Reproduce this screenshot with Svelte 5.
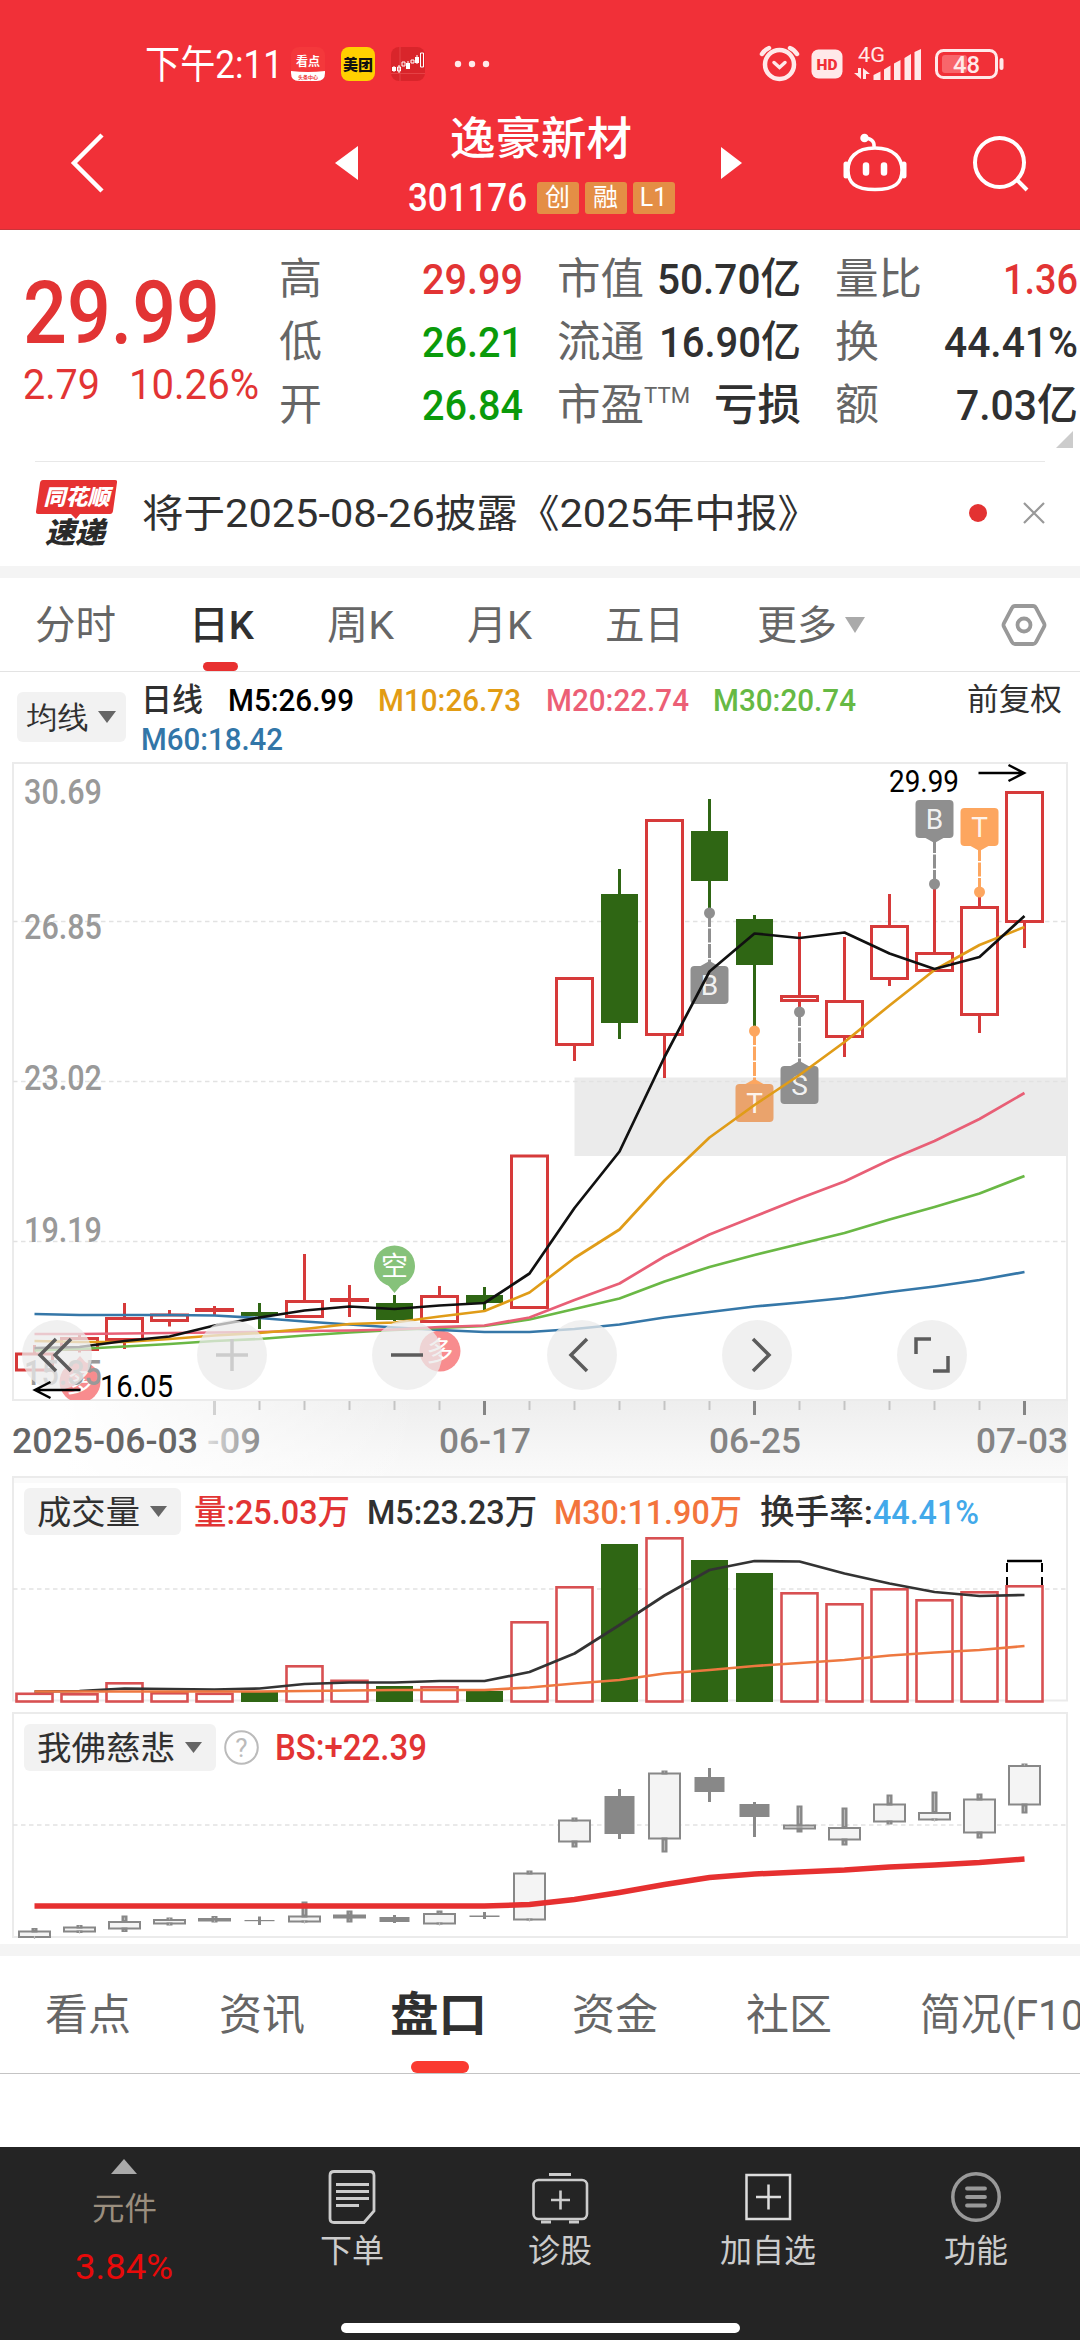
<script lang="ts">
  type Candle = { up: boolean; high: number; top: number; bottom: number; low: number }
  type Legend = { text: string; width: number; cls: string }

  const STEP = 45
  const FIRST = 34.5
  const cx = (i: number) => FIRST + i * STEP

  const toCandles = (rows: number[][]): Candle[] =>
    rows.map(([up, high, top, bottom, low]) => ({ up: up === 1, high, top, bottom, low }))

  const line = (ys: number[]) => ys.map((y, i) => `${cx(i)},${y}`).join(' ')

  const quotes = [
    [
      { label: '高', lw: 43, value: '29.99', vw: 101, cls: 'red' },
      { label: '低', lw: 43, value: '26.21', vw: 101, cls: 'green' },
      { label: '开', lw: 43, value: '26.84', vw: 101, cls: 'green' },
    ],
    [
      { label: '市值', lw: 87, value: '50.70亿', vw: 144, cls: 'ink' },
      { label: '流通', lw: 87, value: '16.90亿', vw: 142, cls: 'ink' },
      { label: '市盈', lw: 87, value: '亏损', vw: 87, cls: 'ink', sup: 'TTM' },
    ],
    [
      { label: '量比', lw: 87, value: '1.36', vw: 75, cls: 'red' },
      { label: '换', lw: 44, value: '44.41%', vw: 134, cls: 'ink' },
      { label: '额', lw: 44, value: '7.03亿', vw: 122, cls: 'ink' },
    ],
  ]

  const periods = [
    { text: '分时', width: 81 },
    { text: '日K', width: 65, active: true },
    { text: '周K', width: 67 },
    { text: '月K', width: 65 },
    { text: '五日', width: 79 },
    { text: '更多', width: 80, more: true },
  ]

  const legends: Legend[] = [
    { text: '日线', width: 62, cls: 'ink' },
    { text: 'M5:26.99', width: 126, cls: 'black' },
    { text: 'M10:26.73', width: 143, cls: 'amber' },
    { text: 'M20:22.74', width: 143, cls: 'pink' },
    { text: 'M30:20.74', width: 143, cls: 'lime' },
  ]

  const candles = toCandles([
    [1, 1345, 1352.5, 1371.5, 1371],
    [1, 1334, 1337, 1351, 1352.5],
    [1, 1303, 1317, 1341, 1349],
    [1, 1310, 1313.5, 1322, 1326.5],
    [1, 1306, 1308, 1312, 1315],
    [0, 1303, 1312, 1316, 1329],
    [1, 1254, 1300, 1318, 1318],
    [1, 1285, 1298, 1302, 1317],
    [0, 1295, 1303, 1320, 1321],
    [1, 1286, 1295, 1323, 1323],
    [0, 1287, 1295, 1303, 1310],
    [1, 1155, 1154.5, 1309, 1309],
    [1, 977, 977, 1046, 1061],
    [0, 869, 894, 1023, 1039],
    [1, 819, 819, 1036, 1078],
    [0, 799, 831, 881, 912],
    [0, 915, 919, 965, 1031],
    [1, 932, 995, 1002, 1012],
    [1, 937, 1000, 1038, 1057],
    [1, 894, 925, 980, 986],
    [1, 884, 952, 972, 972],
    [1, 892, 906, 1016, 1033],
    [1, 791, 791, 923, 948],
  ])

  const averages = [
    { cls: 'line-blue', ys: [1314, 1315, 1315, 1315, 1315.5, 1318, 1321.5, 1324.5, 1327.5, 1330, 1332, 1332, 1329, 1324.5, 1317.5, 1312, 1306.5, 1302.5, 1298, 1292, 1286.5, 1280, 1272] },
    { cls: 'line-lime', ys: [1350.5, 1349, 1346.5, 1344, 1341, 1339, 1335.5, 1332.5, 1330, 1328, 1326, 1319.5, 1309, 1298.5, 1281.5, 1267, 1255, 1244, 1233, 1219.5, 1207, 1193.5, 1176] },
    { cls: 'line-pink', ys: [1334, 1334, 1333.5, 1333, 1332.5, 1332, 1331, 1330.5, 1329.5, 1327, 1325.5, 1317.5, 1300, 1283.5, 1256.5, 1234.5, 1216.5, 1198.5, 1181.5, 1160, 1141, 1119, 1093] },
    { cls: 'line-amber', ys: [1341, 1342, 1342, 1339, 1335.5, 1333, 1329, 1324, 1322.5, 1316.5, 1311, 1292.5, 1258, 1229.5, 1180.5, 1137.5, 1105, 1075, 1042, 1005.5, 970, 945, 927] },
    { cls: 'line-black', ys: [1348, 1347, 1341, 1336.5, 1325.5, 1317.5, 1310.5, 1306.5, 1309, 1305.5, 1303, 1273.5, 1208, 1151.5, 1057, 971.5, 933.5, 938, 932.5, 953.5, 969, 957, 916] },
  ]

  // box is the top of the square tag, dot is the y of the candle end it points at
  const flags = [
    { i: 15, letter: 'B', box: 966, dot: 913, fill: '#8f8f8f' },
    { i: 16, letter: 'T', box: 1084, dot: 1031, fill: '#fda65f', muted: true },
    { i: 17, letter: 'S', box: 1066, dot: 1012, fill: '#8f8f8f' },
    { i: 20, letter: 'B', box: 800, dot: 884, fill: '#8f8f8f' },
    { i: 21, letter: 'T', box: 808, dot: 892, fill: '#fda65f' },
  ]

  const volumes = [1692.5, 1693, 1682, 1692, 1692.5, 1692, 1665, 1679.5, 1686, 1686, 1691, 1621, 1586, 1544, 1537, 1560, 1573, 1592, 1603, 1588, 1599, 1591, 1585]
  const volumeM5 = [1691.5, 1691, 1688.5, 1689, 1689.5, 1688.5, 1684, 1682.5, 1682.5, 1681, 1681, 1672, 1653.5, 1625, 1595.5, 1570, 1561, 1561.5, 1573.5, 1583.5, 1592, 1596, 1595]
  const volumeM30 = [1691.5, 1691.5, 1691.5, 1691.5, 1691.5, 1691.5, 1691, 1690.5, 1690, 1690, 1690, 1687.5, 1683.5, 1680, 1673.5, 1670, 1666, 1663, 1660, 1655.5, 1652.5, 1650, 1646]

  const bsCandles = toCandles([
    [1, 1928, 1930.5, 1938, 1938],
    [1, 1925, 1926.5, 1932.5, 1933],
    [1, 1915.5, 1921, 1929.5, 1932],
    [1, 1917.5, 1919, 1924.5, 1925.5],
    [1, 1916, 1918, 1921.5, 1922.5],
    [0, 1916.5, 1920, 1921.2, 1925],
    [1, 1901.5, 1915.5, 1922.5, 1922.5],
    [1, 1910.5, 1914.5, 1918.5, 1922.5],
    [0, 1915, 1917, 1922, 1923],
    [1, 1910.5, 1913, 1924.5, 1924.5],
    [0, 1912, 1915.5, 1917, 1919],
    [1, 1870.5, 1872.5, 1920.5, 1920.5],
    [1, 1817.5, 1819.5, 1842.5, 1847.5],
    [0, 1789, 1796, 1834, 1839],
    [1, 1770.5, 1772.5, 1839.5, 1852.5],
    [0, 1768, 1777, 1792, 1802],
    [0, 1802, 1804, 1817, 1837],
    [1, 1805.5, 1824.5, 1829.5, 1832.5],
    [1, 1807.5, 1827, 1840.5, 1845.5],
    [1, 1794.5, 1803.5, 1822.5, 1824.5],
    [1, 1791.5, 1812, 1820.5, 1820.5],
    [1, 1793.5, 1798.5, 1833.5, 1838.5],
    [1, 1763.5, 1765, 1805.5, 1813.5],
  ])
  const bsLine = [1906, 1906, 1906, 1906, 1906, 1906, 1906, 1906, 1906, 1906, 1906, 1904.5, 1899.5, 1892.5, 1884.5, 1877.5, 1874, 1872, 1870, 1867, 1865, 1862.5, 1859]

  const sections = [
    { text: '看点', width: 86 },
    { text: '资讯', width: 86 },
    { text: '盘口', width: 97, active: true },
    { text: '资金', width: 86 },
    { text: '社区', width: 86 },
    { text: '简况(F10)', width: 178 },
  ]

  let tool = $state('')
  const tools = [
    { id: 'first', x: 57 },
    { id: 'plus', x: 232 },
    { id: 'minus', x: 407 },
    { id: 'prev', x: 582 },
    { id: 'next', x: 757 },
    { id: 'full', x: 932 },
  ]
</script>

{#snippet fit(text: string, width: number, size: number, cls: string)}
  <svg class="fit {cls}" {width} height={size * 1.2} aria-label={text}>
    <text y={size * 0.96} font-size={size} textLength={width} lengthAdjust="spacingAndGlyphs">{text}</text>
  </svg>
{/snippet}

{#snippet label(text: string, x: number, y: number, width: number, size: number, cls: string)}
  <text class={cls} {x} {y} font-size={size} textLength={width} lengthAdjust="spacingAndGlyphs">{text}</text>
{/snippet}

<div class="screen">
  <header>
    <div class="status">
      {@render fit('下午2:11', 138, 39, 'white')}
      <svg class="app" width="34" height="34" viewBox="0 0 34 34">
        <rect width="34" height="34" rx="8" fill="#f4383b" />
        <path d="M0 24Q17 26 34 24V26Q34 34 26 34H8Q0 34 0 26Z" fill="#fff" />
        <text x="17" y="19" font-size="12" font-weight="700" fill="#fff" text-anchor="middle">看点</text>
        <text x="17" y="32" font-size="5" font-weight="700" fill="#e33" text-anchor="middle">头条中心</text>
      </svg>
      <svg class="app" width="34" height="34" viewBox="0 0 34 34">
        <rect width="34" height="34" rx="8" fill="#ffd000" />
        <text x="17" y="22.500" font-size="15" font-weight="900" fill="#111" text-anchor="middle">美团</text>
      </svg>
      <svg class="app" width="34" height="34" viewBox="0 0 34 34">
        <rect width="34" height="34" rx="8" fill="#d9252b" />
        <path d="M9 0V34M0 26.500H34" stroke="#e8494d" stroke-width="0.800" />
        <path d="M1 20h4v4H1ZM15 16h4v6H15ZM24 10h4v6H24Z" fill="#fff" />
        <path d="M3 19v6M8 18v8M17 14v8M26 8v9" stroke="#fff" />
        <path d="M6.500 20h3v4h-3ZM11 15h3v4h-3ZM20 13h3v3h-3ZM29.500 6h3v14h-3Z" fill="none" stroke="#fff" />
      </svg>
      <svg class="dots" width="36" height="8" viewBox="0 0 36 8" fill="#ffe9e9">
        <circle cx="4" cy="4" r="3.200" /><circle cx="18" cy="4" r="3.200" /><circle cx="32" cy="4" r="3.200" />
      </svg>
      <svg class="signals" width="250" height="40" viewBox="758 44 250 40" fill="none" stroke="#ffe9e9">
        <circle cx="779.500" cy="64.500" r="14.500" stroke-width="4.500" />
        <path d="M762 54Q765 49.500 769 48M797 54Q794 49.500 790 48" stroke-width="4.500" stroke-linecap="round" />
        <path d="M774 62.500L779.500 67.500L785 62.500" stroke-width="3.500" stroke-linecap="round" />
        <rect x="811.500" y="49.500" width="31" height="29" rx="7" fill="#ffe9e9" stroke="none" />
        <text x="827" y="69.500" font-size="15.500" font-weight="900" text-anchor="middle" fill="#f13038" stroke="none">HD</text>
        <g fill="#ffe9e9" stroke="none">
          <text x="858" y="62" font-size="20" textLength="27" lengthAdjust="spacingAndGlyphs">4G</text>
          <path d="M858 68h3V79L854 73h4ZM863 79V68l7 6h-4v5Z" />
          <path d="M873.500 75L880.500 71.500V80h-7ZM884 69.500L890.500 65.500V80H884ZM894 63.500L900.500 60V80H894ZM904.500 58L911 54V80h-6.500ZM914.500 52L921 49V80h-6.500Z" />
        </g>
        <rect x="936.500" y="50.500" width="60" height="27" rx="7" stroke-width="3" />
        <rect x="942" y="55" width="25" height="18" rx="3" fill="#f8666b" stroke="none" />
        <path d="M1001.500 60V68" stroke-width="4" stroke-linecap="round" />
        <text x="953" y="72.500" font-size="23" font-weight="500" textLength="27" lengthAdjust="spacingAndGlyphs" fill="#ffe9e9" stroke="none">48</text>
      </svg>
    </div>

    <div class="bar">
      <svg class="back" width="40" height="66" viewBox="68 130 40 66"><path d="M102 135L74 163L102 191" fill="none" stroke="#fff" stroke-width="4.500" /></svg>
      <svg class="prev" width="24" height="36" viewBox="0 0 24 36"><path d="M23 1V35L0 18Z" fill="#fff" /></svg>
      <div class="title">
        {@render fit('逸豪新材', 182, 45.5, 'white medium')}
        <div class="code">
          {@render fit('301176', 119, 38, 'white medium')}
          <span class="badge">创</span>
          <span class="badge">融</span>
          <span class="badge">L1</span>
        </div>
      </div>
      <svg class="next" width="22" height="32" viewBox="0 0 22 32"><path d="M0 0V32L21 16Z" fill="#fff" /></svg>
      <svg class="robot" width="68" height="66" viewBox="841 131 68 66" fill="none" stroke="#fff" stroke-width="3.500">
        <path d="M875 149C895 149 902 160 902 171C902 184 895 190.500 875 190.500C855 190.500 848 184 848 171C848 160 855 149 875 149Z" />
        <path d="M874 148Q875 140 865 139" />
        <circle cx="864.500" cy="139" r="2.500" fill="#fff" />
        <path d="M846 165V177M904 165V177" stroke-width="5" stroke-linecap="round" />
        <path d="M866 166.500V173.500M884 166.500V173.500" stroke-width="6.500" stroke-linecap="round" />
      </svg>
      <svg class="search" width="62" height="66" viewBox="970 131 62 66" fill="none" stroke="#fff" stroke-width="4">
        <circle cx="999.500" cy="163.500" r="24.500" />
        <path d="M1017 181L1027 191" />
      </svg>
    </div>
  </header>

  <section class="quote">
    <div class="price">
      {@render fit('29.99', 197, 87, 'red medium')}
      <div class="change">
        {@render fit('2.79', 77, 43, 'red')}
        {@render fit('10.26%', 130, 43, 'red')}
      </div>
    </div>
    {#each quotes as column}
      <div class="column">
        {#each column as q}
          <div class="cell">
            <span class="name">
              {@render fit(q.label, q.lw, 43, 'grey')}
              {#if q.sup}<span class="sup">{@render fit(q.sup, 46, 22, 'grey')}</span>{/if}
            </span>
            {@render fit(q.value, q.vw, 43, q.cls + ' medium')}
          </div>
        {/each}
      </div>
    {/each}
    <i class="corner"></i>
  </section>

  <section class="news">
    <svg width="82" height="68" viewBox="35 479 82 68">
      <path d="M43 480H115Q117.500 480 117 482.500L113 511Q112.500 514 110 514H80L76 519L71 514H38Q35.500 514 36 511.500L40 483Q40.500 480 43 480Z" fill="#e63232" />
      <g font-weight="900" text-anchor="middle" font-style="italic">
        <text x="76.500" y="505" font-size="22" fill="#fff">同花顺</text>
        <text x="75" y="543" font-size="29" fill="#2a2a2a" textLength="60" lengthAdjust="spacingAndGlyphs">速递</text>
      </g>
    </svg>
    {@render fit('将于2025-08-26披露《2025年中报》', 677, 39, 'ink')}
    <i class="unread"></i>
    <svg class="close" width="22" height="22" viewBox="0 0 22 22"><path d="M1 1L21 21M21 1L1 21" stroke="#999" stroke-width="2.200" /></svg>
  </section>

  <div class="band"></div>

  <nav class="periods">
    {#each periods as p}
      <span class="period" class:active={p.active}>
        {@render fit(p.text, p.width, 39.5, p.active ? 'ink medium' : 'grey')}
        {#if p.more}<i class="down big"></i>{/if}
      </span>
    {/each}
    <svg class="gear" width="46" height="44" viewBox="1000 603 46 44" fill="none" stroke="#999" stroke-width="3.800">
      <path d="M1014 606H1032Q1034 606 1035 608L1043 623Q1044 625 1043 627L1035 642Q1034 644 1032 644H1014Q1012 644 1011 642L1003 627Q1002 625 1003 623L1011 608Q1012 606 1014 606Z" />
      <circle cx="1023" cy="625" r="6.500" />
    </svg>
  </nav>

  <section class="legend">
    <button class="pick">{@render fit('均线', 61, 31, 'ink')}<i class="down"></i></button>
    <div class="rows">
      <div class="row">
        {#each legends as l}{@render fit(l.text, l.width, 32, l.cls + ' medium')}{/each}
      </div>
      <div class="row">{@render fit('M60:18.42', 142, 32, 'blue medium')}</div>
    </div>
    {@render fit('前复权', 95, 31, 'ink adjust')}
  </section>

  <svg class="chart" width="1080" height="720" viewBox="0 756 1080 720">
    <defs>
      <linearGradient id="axis" x1="0" y1="0" x2="0" y2="1">
        <stop offset="0" stop-color="#eeeeee" /><stop offset="1" stop-color="#fafafa" />
      </linearGradient>
      <linearGradient id="fade"><stop offset="0.150" stop-color="#fff" /><stop offset="1" stop-color="#fff" stop-opacity="0" /></linearGradient>
      <linearGradient id="tail"><stop offset="0" stop-color="#ddd" /><stop offset="1" stop-color="#8a8a8a" /></linearGradient>
      <clipPath id="pane"><rect x="13" y="763" width="1055" height="637" /></clipPath>
    </defs>
    <rect x="0" y="1401" width="1068" height="75" fill="url(#axis)" />
    <rect x="0" y="1401" width="420" height="75" fill="url(#fade)" />
    <rect x="13" y="763" width="1054" height="637" fill="#fff" stroke="#ebebeb" stroke-width="2" />
    <rect x="574.500" y="1077.500" width="493" height="78.500" fill="#ebebeb" />
    <path class="grid" d="M13 921.500H1067M13 1081.500H1067M13 1241.500H1067" />

    <g clip-path="url(#pane)">
      <g fill="#f88c8e">
        <path d="M80 1356L87 1364H73Z" />
        <circle cx="80" cy="1382" r="20.500" />
        <circle cx="440" cy="1351" r="20.500" />
      </g>
      <g class="seal"><text x="80" y="1392">多</text><text x="440" y="1361">多</text></g>
      <path d="M394.500 1293L387 1284H402Z" fill="#86c27a" />
      <circle cx="394.500" cy="1266" r="20.500" fill="#86c27a" />
      <g class="seal"><text x="394.500" y="1276">空</text></g>
    </g>

    {#each candles as c, i}
      {#if c.up}
        <path class="wick-up" d="M{cx(i)} {c.high}V{c.top + 1}M{cx(i)} {c.bottom - 1}V{c.low}" />
        <rect class="body-up" x={cx(i) - 18} y={c.top + 1.5} width="36" height={c.bottom - c.top - 3} />
      {:else}
        <path class="wick-down" d="M{cx(i)} {c.high}V{c.low}" />
        <rect class="body-down" x={cx(i) - 18.5} y={c.top} width="37" height={c.bottom - c.top} />
      {/if}
    {/each}

    {#each flags as f}
      {@const below = f.box > f.dot}
      <g transform="translate({cx(f.i)} 0)">
        <path d="M0 {f.dot}V{below ? f.box : f.box + 38}" stroke={f.fill} stroke-width="3" stroke-dasharray="14 1.500" />
        <circle cy={f.dot} r="5.500" fill={f.fill} />
        <path d={below ? `M0 ${f.box - 5}L9 ${f.box}H-9Z` : `M0 ${f.box + 43}L9 ${f.box + 38}H-9Z`} fill={f.fill} />
        <rect x="-19" y={f.box} width="38" height="38" rx="4" fill={f.muted ? '#eaa36c' : f.fill} />
        <text class="flag" y={f.box + 29}>{f.letter}</text>
      </g>
    {/each}

    {#each averages as a}
      <polyline class="avg {a.cls}" points={line(a.ys)} />
    {/each}

    <g class="ticks">
      {#each candles as _, i}
        {#if i >= 4}
          <path class:major={i % 6 === 4} class:faint={i === 4} d="M{cx(i)} 1401V{i % 6 === 4 ? 1415 : 1410}" />
        {/if}
      {/each}
    </g>

    {@render label('30.69', 24, 804, 78, 35, 'scale')}
    {@render label('26.85', 24, 939, 78, 35, 'scale')}
    {@render label('23.02', 24, 1090, 78, 35, 'scale')}
    {@render label('19.19', 24, 1242, 78, 35, 'scale')}
    {@render label('15.35', 24, 1385, 78, 35, 'scale')}

    {#each tools as t}
      <g
        class="tool"
        class:disabled={t.id === 'plus'}
        transform="translate({t.x} 1355)"
        role="button"
        tabindex="-1"
        aria-label={t.id}
        onclick={() => (tool = t.id)}
        onkeydown={() => (tool = t.id)}
      >
        <circle r="35" />
        {#if t.id === 'first'}
          <path d="M-1 -16L-17 0L-1 16M14 -16L-2 0L14 16" />
        {:else if t.id === 'plus'}
          <path d="M-16 0H16M0 -16V16" />
        {:else if t.id === 'minus'}
          <path d="M-16 0H16" />
        {:else if t.id === 'prev'}
          <path d="M5 -16L-11 0L5 16" />
        {:else if t.id === 'next'}
          <path d="M-4 -16L12 0L-4 16" />
        {:else}
          <path d="M-16 -1V-16H-1M1 16H16V1" />
        {/if}
      </g>
    {/each}

    {@render label('29.99', 889, 792, 70, 31, 'black')}
    <path class="arrow" d="M978.500 773H1024M1008.500 765L1024 773L1008.500 781" />
    {@render label('16.05', 100, 1397, 73, 31, 'black')}
    <path class="arrow" d="M80.500 1390H35M50.500 1382L35 1390L50.500 1398" />

    {@render label('2025-06-03', 12, 1453, 186, 35, 'date strong')}
    <text x="207" y="1453" font-size="35" font-weight="500" textLength="54" lengthAdjust="spacingAndGlyphs" fill="url(#tail)">-09</text>
    {@render label('06-17', 439, 1453, 92, 35, 'date')}
    {@render label('06-25', 709, 1453, 92, 35, 'date')}
    {@render label('07-03', 976, 1453, 92, 35, 'date')}
  </svg>

  <svg class="chart" width="1080" height="230" viewBox="0 1476 1080 230">
    <rect x="13" y="1477" width="1055" height="6" fill="#fafafa" />
    <rect x="13" y="1477" width="1054" height="223.500" fill="none" stroke="#ebebeb" stroke-width="2" />
    <path class="grid" d="M13 1589H1067" />
    <rect x="24" y="1488" width="157" height="47" rx="6" fill="#f2f2f2" />
    {@render label('成交量', 37, 1524, 103, 33.5, 'ink')}
    <path d="M150 1506H167L158.500 1517Z" fill="#666" />
    {@render label('量:25.03万', 194, 1524, 156, 34, 'red medium')}
    {@render label('M5:23.23万', 367, 1524, 170, 34, 'ink medium')}
    {@render label('M30:11.90万', 554, 1524, 188, 34, 'orange medium')}
    {@render label('换手率:', 760, 1524, 113, 34, 'ink medium')}
    {@render label('44.41%', 873, 1524, 106, 34, 'sky medium')}
    {#each volumes as top, i}
      {#if candles[i].up}
        <rect class="vol-up" x={cx(i) - 18} y={top + 1.3} width="36" height={1700.2 - top} />
      {:else}
        <rect class="body-down" x={cx(i) - 18.5} y={top} width="37" height={1702 - top} />
      {/if}
    {/each}
    <path d="M1007 1561H1042" stroke="#000" stroke-width="2.500" />
    <path d="M1007 1563V1585M1042 1563V1585" stroke="#000" stroke-width="2" stroke-dasharray="9 5" />
    <polyline class="avg line-ink" points={line(volumeM5)} />
    <polyline class="avg line-orange" points={line(volumeM30)} />
  </svg>

  <svg class="chart" width="1080" height="238" viewBox="0 1706 1080 238">
    <rect x="13" y="1713" width="1054" height="224" fill="none" stroke="#ebebeb" stroke-width="2" />
    <path class="grid" d="M13 1825H1067" />
    <rect x="24" y="1724" width="192" height="47" rx="6" fill="#f2f2f2" />
    {@render label('我佛慈悲', 37, 1760, 138, 33.5, 'ink')}
    <path d="M185 1742H202L193.500 1753Z" fill="#666" />
    <circle cx="241.500" cy="1747.500" r="16.300" fill="none" stroke="#bbb" stroke-width="2" />
    <text x="241.500" y="1757" font-size="26" fill="#bbb" text-anchor="middle">?</text>
    {@render label('BS:+22.39', 275, 1760, 152, 36, 'red medium')}
    {#each bsCandles as c, i}
      {#if c.up}
        <rect class="bs-up" x={cx(i) - 15.5} y={c.top + 1} width="31" height={c.bottom - c.top - 2} />
        <path class="bs-wick" d="M{cx(i)} {c.high}V{c.top + 2}M{cx(i)} {c.bottom - 2}V{c.low}" />
        <path class="bs-core" d="M{cx(i)} {c.high + 2}V{c.top - 1}M{cx(i)} {c.bottom + 1}V{c.low - 2}" />
      {:else}
        <rect x={cx(i) - 15} y={c.top} width="30" height={c.bottom - c.top} fill="#888" />
        <path d="M{cx(i)} {c.high}V{c.low}" stroke="#888" stroke-width="3" />
      {/if}
    {/each}
    <polyline points={line(bsLine)} fill="none" stroke="#e63030" stroke-width="5.500" />
  </svg>

  <div class="band"></div>

  <nav class="sections">
    {#each sections as s}
      <span class="section" class:active={s.active}>
        {@render fit(s.text, s.width, s.active ? 47 : 43, s.active ? 'ink bold' : 'grey')}
      </span>
    {/each}
  </nav>

  <div class="empty"></div>

  <footer>
    <div class="actions">
      <div class="sector">
        <i class="up"></i>
        {@render fit('元件', 65, 32, 'tan')}
        {@render fit('3.84%', 98, 35, 'loss')}
      </div>
      <div class="action">
        <svg width="52" height="56" viewBox="326 2169 52 56" fill="none" stroke="#ccc" stroke-width="2.800">
          <path d="M334 2171.500H370Q374 2171.500 374 2175.500V2211L364 2222.500H334Q330 2222.500 330 2218.500V2175.500Q330 2171.500 334 2171.500Z" />
          <path d="M336 2184.500H369M336 2191.500H369M336 2198.500H369M336 2205.500H359" />
        </svg>
        {@render fit('下单', 64, 32, 'light')}
      </div>
      <div class="action">
        <svg width="60" height="56" viewBox="530 2169 60 56" fill="none" stroke="#ccc" stroke-width="2.600">
          <rect x="533.500" y="2180" width="53.500" height="39" rx="5" />
          <path d="M549 2174.500H571M541 2222H551M569 2222H579" stroke-width="3" />
          <path d="M551 2200H570M560.500 2190.500V2209.500" />
        </svg>
        {@render fit('诊股', 64, 32, 'light')}
      </div>
      <div class="action">
        <svg width="50" height="56" viewBox="743 2169 50 56" fill="none" stroke="#ddd" stroke-width="2.500">
          <rect x="746.500" y="2175" width="43.500" height="44" />
          <path d="M756 2197H781M768.500 2184.500V2209.500" />
        </svg>
        {@render fit('加自选', 96, 32, 'light')}
      </div>
      <div class="action">
        <svg width="52" height="56" viewBox="950 2169 52 56" fill="none" stroke="#999">
          <circle cx="976" cy="2197" r="23.200" stroke-width="3.500" />
          <path d="M967 2188.500H985M967 2197H985M967 2205.500H985" stroke-width="3.800" stroke-linecap="round" />
        </svg>
        {@render fit('功能', 64, 32, 'light')}
      </div>
    </div>
    <div class="home"></div>
  </footer>
</div>

<style>
  :global(body) {
    margin: 0;
    background: #fff;
  }

  .screen {
    display: flex;
    flex-direction: column;
    width: 1080px;
    height: 2340px;
    overflow: hidden;
    background: #fff;
    font-family: Roboto, 'Noto Sans CJK SC', sans-serif;
  }

  svg { display: block; flex-shrink: 0; }
  .fit { overflow: visible; }

  /* ── Text colours ── */
  .white { fill: #fff; }
  .ink { fill: #303030; }
  .black { fill: #000; }
  .grey { fill: #666; }
  .red { fill: #e23434; }
  .green { fill: #0a9a0a; }
  .amber { fill: #e29c14; }
  .pink { fill: #ec5f76; }
  .lime { fill: #66b944; }
  .blue { fill: #3276a8; }
  .orange { fill: #f3743c; }
  .sky { fill: #42a9ea; }
  .light { fill: #ccc; }
  .tan { fill: #9a8e7e; }
  .loss { fill: #e80a0a; }
  .medium { font-weight: 500; }
  .bold { font-weight: 700; }

  /* ── Header ── */
  header {
    height: 230px;
    background: #f13038;
    box-sizing: border-box;
    border-bottom: 1px solid #c9343a;
  }

  .status {
    display: flex;
    align-items: center;
    height: 66px;
    padding: 31px 0 0 145px;
  }

  .app { margin-left: 8px; }
  .app + .app { margin-left: 16px; }
  .dots { margin-left: 29px; }
  .signals { margin-left: 268px; }

  .bar {
    display: flex;
    align-items: center;
    height: 132px;
    padding-left: 68px;
  }

  .prev { margin-left: 227px; }
  .next { margin-left: 47px; }
  .robot { margin-left: 98px; }
  .search { margin-left: 61px; }

  .title {
    display: flex;
    flex-direction: column;
    align-items: center;
    gap: 9px;
    width: 266px;
    margin-left: 49px;
    padding-top: 6px;
  }

  .code { display: flex; align-items: center; gap: 6px; }
  .code .fit { margin-right: 4px; }

  .badge {
    width: 42px;
    height: 32px;
    border-radius: 3px;
    background: #e48e45;
    color: #fff;
    font-size: 25px;
    line-height: 32px;
    text-align: center;
  }

  /* ── Quote ── */
  .quote {
    position: relative;
    display: flex;
    height: 231px;
    margin: 0 35px;
    border-bottom: 1px solid #e8e8e8;
  }

  .price {
    width: 256px;
    margin-left: -12px;
    padding-top: 29px;
    flex-shrink: 0;
  }

  .change { display: flex; gap: 29px; margin-top: -5px; }

  .column {
    width: 244px;
    flex-shrink: 0;
    padding-top: 17px;
    margin-right: 34px;
  }

  .column:nth-of-type(4) { width: 243px; }

  .cell {
    display: flex;
    align-items: center;
    justify-content: space-between;
    height: 63px;
  }

  .name { display: flex; }
  .sup { padding-top: 3px; }

  .corner {
    position: absolute;
    right: -28px;
    bottom: 13px;
    border-left: 17px solid transparent;
    border-bottom: 17px solid #ccc;
  }

  /* ── News ── */
  .news {
    display: flex;
    align-items: center;
    height: 102px;
    padding: 0 0 2px 35px;
  }

  .news .fit { margin-left: 25px; }

  .unread {
    width: 18px;
    height: 18px;
    margin-left: 150px;
    border-radius: 50%;
    background: #e33232;
  }

  .close { margin-left: 36px; }
  .band { height: 12px; background: #f4f4f4; }

  /* ── Period tabs ── */
  .periods {
    display: flex;
    align-items: center;
    gap: 73px;
    height: 93px;
    padding-left: 35px;
    border-bottom: 1px solid #e3e3e3;
  }

  .period {
    position: relative;
    display: flex;
    align-items: center;
    gap: 8px;
    height: 93px;
  }

  .period.active::after {
    content: '';
    position: absolute;
    left: 14px;
    bottom: 0;
    width: 35px;
    height: 9px;
    border-radius: 5px;
    background: #e83030;
  }

  .gear { margin-left: 63px; }

  .down {
    border: 9px solid transparent;
    border-top: 12px solid #666;
    border-bottom: 0;
  }

  .down.big {
    border-width: 16px 10.5px 0;
    border-top-color: #aaa;
  }

  /* ── Moving average legend ── */
  .legend {
    display: flex;
    align-items: flex-start;
    height: 84px;
    padding: 0 18px 0 17px;
  }

  .pick {
    display: flex;
    align-items: center;
    justify-content: center;
    gap: 10px;
    width: 109px;
    height: 50px;
    margin: 20px 15px 0 0;
    padding: 0;
    border: none;
    border-radius: 6px;
    background: #f2f2f2;
  }

  .rows { padding-top: 8px; }
  .row { display: flex; gap: 24.5px; height: 39px; }
  .adjust { margin: 8px 0 0 auto; }

  /* ── Charts ── */
  .grid { stroke: #e2e2e2; stroke-width: 1.3; stroke-dasharray: 4.5 3.5; }
  .wick-up { stroke: #d63a3a; stroke-width: 3; }
  .body-up { fill: #fff; stroke: #d63a3a; stroke-width: 3; }
  .wick-down { stroke: #2f6614; stroke-width: 3; }
  .body-down { fill: #2f6614; }
  .vol-up { fill: #fff; stroke: #d85052; stroke-width: 2.6; }
  .avg { fill: none; stroke-width: 2.7; stroke-linejoin: round; }
  .line-black { stroke: #111; }
  .line-ink { stroke: #333; }
  .line-amber { stroke: #e09c18; }
  .line-pink { stroke: #e85f76; }
  .line-lime { stroke: #6ab845; }
  .line-blue { stroke: #3577a8; }
  .line-orange { stroke: #ee7840; }
  .scale { fill: #999; font-weight: 500; }
  .date { fill: #848484; font-weight: 500; }
  .date.strong { fill: #666; }
  .arrow { fill: none; stroke: #000; stroke-width: 2.5; }
  .flag { fill: #fff; fill-opacity: 0.9; font-size: 28px; text-anchor: middle; }
  .seal { fill: #fff; font-size: 27px; text-anchor: middle; }

  .ticks path { stroke: #c4c4c4; stroke-width: 2; }
  .ticks .major { stroke: #858585; stroke-width: 3; }
  .ticks .faint { stroke: #d2d2d2; }

  .tool { outline: none; cursor: pointer; }
  .tool circle { fill: #ebebeb; fill-opacity: 0.75; }
  .tool path { fill: none; stroke: #5c5c5c; stroke-width: 3.5; }
  .tool.disabled path { stroke: #ccc; }

  .bs-up { fill: #f4f4f4; stroke: #888; stroke-width: 2; }
  .bs-wick { stroke: #888; stroke-width: 6; }
  .bs-core { stroke: #bbb; stroke-width: 1.2; }

  /* ── Section tabs ── */
  .sections {
    display: flex;
    align-items: center;
    gap: 88px;
    height: 117px;
    padding-left: 45px;
    border-bottom: 1px solid #c4c4c4;
    overflow: hidden;
  }

  .section {
    position: relative;
    display: flex;
    align-items: center;
    height: 117px;
  }

  .section.active { margin: 0 -3px; }

  .section.active::after {
    content: '';
    position: absolute;
    left: 21px;
    bottom: 0;
    width: 58px;
    height: 12px;
    border-radius: 6px;
    background: #fa3a30;
  }

  .empty { height: 73px; }

  /* ── Bottom bar ── */
  footer {
    display: flex;
    flex-direction: column;
    align-items: center;
    height: 193px;
    background: #242424;
  }

  .actions {
    display: grid;
    grid-template-columns: 248px repeat(4, 208px);
    height: 176px;
  }

  .sector,
  .action {
    display: flex;
    flex-direction: column;
    align-items: center;
  }

  .sector { padding-top: 12px; }
  .sector .tan { margin: 15px 0 18px; }
  .action { padding-top: 22px; gap: 6px; }

  .up {
    border: 13px solid transparent;
    border-bottom: 15px solid #aaa;
    border-top: 0;
  }

  .home {
    width: 399px;
    height: 10px;
    border-radius: 5px;
    background: #fff;
  }
</style>
